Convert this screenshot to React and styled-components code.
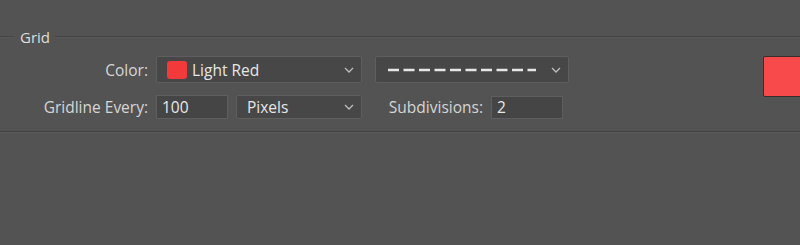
import React from "react";
import styled, { createGlobalStyle } from "styled-components";

const Global = createGlobalStyle`
  html, body {
    margin: 0;
    padding: 0;
    background: #535353;
  }
  body {
    font-family: "Open Sans", "Noto Sans", sans-serif;
    font-size: 15.5px;
    color: #d4d4d4;
  }
`;

const Panel = styled.div`
  width: 800px;
  height: 245px;
  overflow: hidden;
  padding-top: 28px;
  box-sizing: border-box;
`;

const GroupHeader = styled.div`
  display: flex;
  align-items: center;
  height: 18px;
`;

const Rule = styled.div`
  height: 1px;
  background: #434343;
  border-bottom: 1px solid #5a5a5a;
  flex: ${(p) => (p.$grow ? 1 : "none")};
  width: ${(p) => (p.$grow ? "auto" : "14px")};
`;

const GroupTitle = styled.span`
  padding: 0 5px 0 6px;
  color: #dedede;
  font-size: 15px;
  line-height: 18px;
`;

const Body = styled.div`
  display: flex;
  justify-content: space-between;
  padding-top: 10px;
  height: 75px;
  border-bottom: 1px solid #434343;
  box-shadow: 0 1px 0 #5a5a5a;
`;

const Form = styled.div`
  display: flex;
  flex-direction: column;
  gap: 12px;
`;

const Row = styled.div`
  display: flex;
  align-items: center;
  height: ${(p) => p.$h}px;
`;

const Label = styled.label`
  width: ${(p) => p.$w || 148}px;
  margin-left: ${(p) => p.$ml || 0}px;
  margin-right: 8px;
  text-align: right;
  white-space: nowrap;
  color: #d6d6d6;
`;

const Select = styled.div`
  display: flex;
  align-items: center;
  box-sizing: border-box;
  width: ${(p) => p.$w}px;
  height: 100%;
  margin-left: ${(p) => p.$ml || 0}px;
  padding: 0 7px 0 10px;
  background: #474747;
  border: 1px solid #5e5e5e;
  border-radius: 2px;
  color: #e6e6e6;
`;

const SelectValue = styled.div`
  flex: 1;
  display: flex;
  align-items: center;
  gap: 5px;
  white-space: nowrap;
`;

const Field = styled.div`
  box-sizing: border-box;
  width: 72px;
  height: ${(p) => p.$h || 24}px;
  padding: 0 5px;
  display: flex;
  align-items: center;
  background: #454545;
  border: 1px solid #5e5e5e;
  color: #e8e8e8;
`;

const Chip = styled.span`
  width: 20px;
  height: 18px;
  border-radius: 3px;
  background: #f23a3a;
`;

const BigSwatch = styled.div`
  width: 45px;
  height: 41px;
  box-sizing: border-box;
  background: #f84a4a;
  border: 1px solid #3b2c2c;
  border-radius: 2px;
  margin-right: -8px;
`;

const Chevron = () => (
  <svg width="10" height="6" viewBox="0 0 10 6">
    <path d="M1 1 L5 5 L9 1" fill="none" stroke="#bdbdbd" strokeWidth="1.3" />
  </svg>
);

const Dashes = () => (
  <svg width="150" height="4" viewBox="0 0 150 4">
    <line
      x1="2"
      y1="2"
      x2="150"
      y2="2"
      stroke="#e6e6e6"
      strokeWidth="2.4"
      strokeDasharray="11 4.5"
    />
  </svg>
);

export default function App() {
  return (
    <Panel>
      <Global />
      <GroupHeader>
        <Rule />
        <GroupTitle>Grid</GroupTitle>
        <Rule $grow />
      </GroupHeader>
      <Body>
        <Form>
          <Row $h={27}>
            <Label>Color:</Label>
            <Select $w={206}>
              <SelectValue>
                <Chip />
                Light Red
              </SelectValue>
              <Chevron />
            </Select>
            <Select $w={194} $ml={13}>
              <SelectValue>
                <Dashes />
              </SelectValue>
              <Chevron />
            </Select>
          </Row>
          <Row $h={24}>
            <Label>Gridline Every:</Label>
            <Field>100</Field>
            <Select $w={126} $ml={8}>
              <SelectValue>Pixels</SelectValue>
              <Chevron />
            </Select>
            <Label $w={95} $ml={26}>
              Subdivisions:
            </Label>
            <Field $h={23}>2</Field>
          </Row>
        </Form>
        <BigSwatch />
      </Body>
    </Panel>
  );
}
